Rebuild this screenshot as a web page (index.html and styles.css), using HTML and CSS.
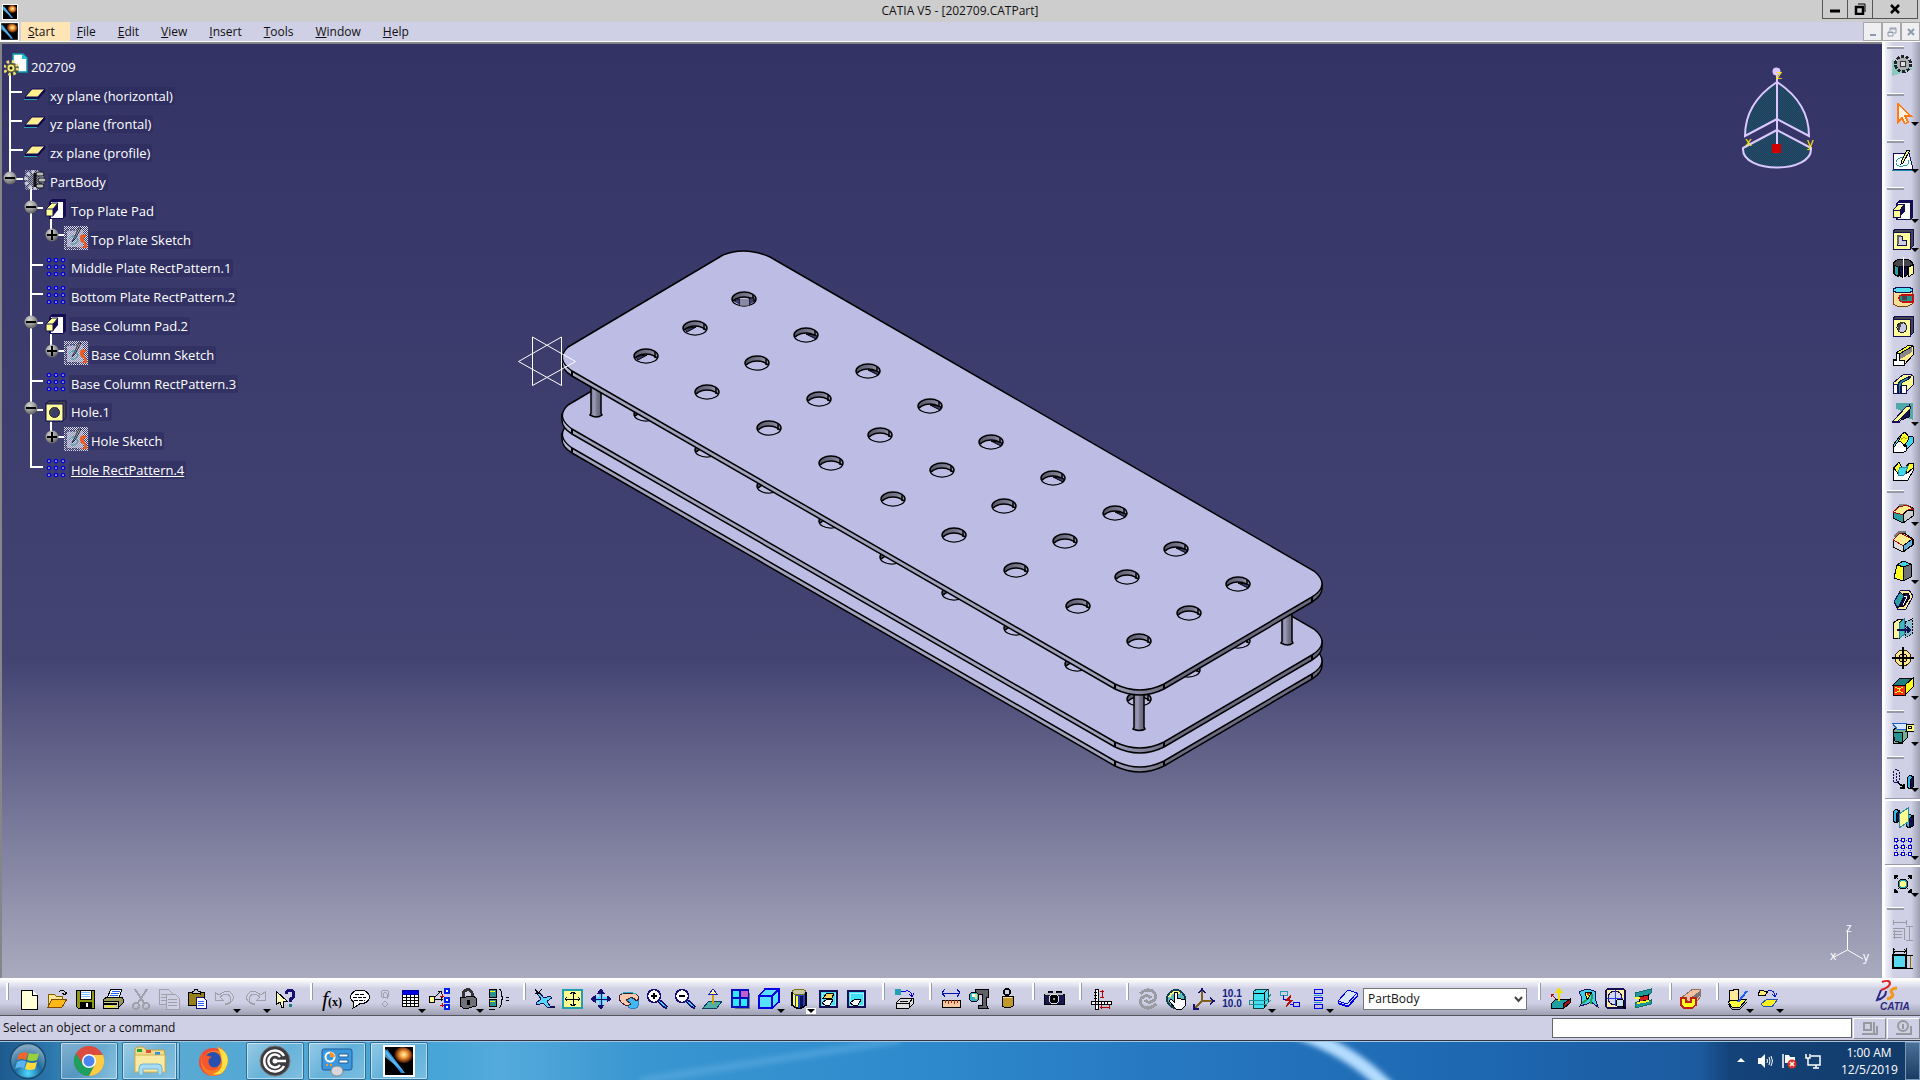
FILE: index.html
```html
<!DOCTYPE html>
<html lang="en">
<head>
<meta charset="utf-8">
<title>CATIA V5 - [202709.CATPart]</title>
<link rel="stylesheet" href="styles.css">
</head>
<body>
<svg class="defs" aria-hidden="true">
  <defs>
    <radialGradient id="knobFill" cx="40%" cy="30%" r="75%"><stop offset="0" stop-color="#d5d5d5"/><stop offset=".6" stop-color="#8f8f8f"/><stop offset="1" stop-color="#555"/></radialGradient>
    <radialGradient id="flame" cx="58%" cy="38%" r="45%"><stop offset="0" stop-color="#fff0c0"/><stop offset=".35" stop-color="#f9a640"/><stop offset=".75" stop-color="#8a3c10"/><stop offset="1" stop-color="#000"/></radialGradient>
    <linearGradient id="side" gradientUnits="userSpaceOnUse" x1="562" y1="0" x2="1322" y2="0"><stop offset="0" stop-color="#c4c3e4"/><stop offset=".02" stop-color="#a3a2be"/><stop offset=".72" stop-color="#a3a2be"/><stop offset=".8" stop-color="#6b6a80"/><stop offset="1" stop-color="#6b6a80"/></linearGradient>
    <linearGradient id="column"><stop offset="0" stop-color="#72718a"/><stop offset=".35" stop-color="#9c9bb8"/><stop offset=".6" stop-color="#77768e"/><stop offset="1" stop-color="#5d5c70"/></linearGradient>
    <linearGradient id="bore"><stop offset="0" stop-color="#585769"/><stop offset=".6" stop-color="#77768d"/><stop offset="1" stop-color="#a3a2be"/></linearGradient>
    <pattern id="mesh" width="2" height="2" patternUnits="userSpaceOnUse"><rect width="2" height="2" fill="#333366"/><path d="M0 0h1v1H0zM1 1h1v1H1z" fill="#0f5a60"/></pattern>
    <pattern id="dither" width="2" height="2" patternUnits="userSpaceOnUse"><path d="M0 0h1v1H0zM1 1h1v1H1z" fill="#dcdce8"/></pattern>
    <clipPath id="holeClip"><ellipse rx="11.5" ry="6.5"/></clipPath>

    <symbol id="catia" viewBox="0 0 16 16"><path d="M0 0h16v16H0z" fill="#fff"/><path d="M1 1h14v14H1z" fill="#000"/><ellipse cx="9.500" cy="6" rx="5.500" ry="5" fill="url(#flame)"/><path d="M1 4L9 14H11L2 2Z" fill="#2b86d8"/><path d="M1 2L11 14 1 6Z" fill="#69c3f5" opacity=".75"/></symbol>
    <symbol id="plane" viewBox="0 0 22 12"><path d="M1 9L8 1H21L14 9Z" fill="#ffee8c" stroke="#100a50"/><path d="M1 10h13l7-8" fill="none" stroke="#100a50" stroke-width="2"/><path d="M0 11.500h13" stroke="#2aa0a8"/></symbol>
    <symbol id="pad" viewBox="0 0 22 22"><path d="M4 4L7 1H21V18L18 21H4Z" fill="#140f55"/><path d="M6 4H18V20H6Z" fill="#fff"/><path d="M1 11L7 5H13L8 11V18H1Z" fill="#ffff90" stroke="#140f55"/><path d="M8 11L13 5V12L8 18Z" fill="#140f55"/><path d="M1 11H8" stroke="#140f55"/></symbol>
    <symbol id="sketch" viewBox="0 0 24 24"><path d="M0 0h24v24H0z" fill="url(#dither)"/><path d="M3 4h16v17H3z" fill="#c4c6dc" opacity=".65"/><path d="M2 4v18h13M3 4h10" stroke="#25285e" stroke-dasharray="2 1" fill="none"/><path d="M17 2L11 13 8 16 10 12 15 2Z" fill="#e6e080" stroke="#181850"/><path d="M5 13q5-7 9 1-2 5-7 4" stroke="#2a9aa0" fill="none"/><path d="M22 9q-6-2-6 3t4 5q2 5-6 5h9v-3l-3-5q-2-3 2-3Z" fill="#f05a1e"/></symbol>
    <symbol id="pattern" viewBox="0 0 22 22"><path d="M4 4H18M4 11H18M4 18H18M4 4V18M11 4V18M18 4V18" stroke="#2020d0" stroke-dasharray="1 1"/><g fill="#fffaa0" stroke="#0000e0" stroke-width="1.500"><circle cx="4" cy="4" r="1.600"/><circle cx="11" cy="4" r="1.600"/><circle cx="18" cy="4" r="1.600"/><circle cx="4" cy="11" r="1.600"/><circle cx="11" cy="11" r="1.600"/><circle cx="18" cy="11" r="1.600"/><circle cx="4" cy="18" r="1.600"/><circle cx="11" cy="18" r="1.600"/><circle cx="18" cy="18" r="1.600"/></g></symbol>
    <symbol id="holeicon" viewBox="0 0 22 22"><path d="M1 3L4 1H21V18L18 21H1Z" fill="#45454a" stroke="#140f55"/><path d="M1 4H18V21H1Z" fill="#ffff99" stroke="#140f55"/><circle cx="10" cy="12.500" r="5" fill="#c8c8e6" stroke="#222"/><path d="M6 15V10l4-3h4q-6 1-6 8Z" fill="#45454a"/></symbol>
    <symbol id="holenode" viewBox="0 0 22 22"><path d="M1 3L4 1H21V18L18 21H1Z" fill="#45454a" stroke="#140f55"/><path d="M1 4H18V21H1Z" fill="#ffff99" stroke="#140f55"/><circle cx="9.500" cy="12.500" r="5" fill="#3d3c6c" stroke="#222"/><path d="M5 15V10l4-3h4q-6 1-6 8Z" fill="#45454a"/></symbol>
    <symbol id="minus" viewBox="0 0 14 14"><circle cx="7" cy="7" r="6.500" fill="url(#knobFill)"/><path d="M2 7H12" stroke="#000" stroke-width="2"/></symbol>
    <symbol id="plus" viewBox="0 0 14 14"><circle cx="7" cy="7" r="6.500" fill="url(#knobFill)"/><path d="M2 7H12M7 2V12" stroke="#000" stroke-width="2"/></symbol>

    <g id="plate">
      <path d="M562 357V362Q562 370 572 376L1115 689Q1140 701 1164 689L1312 602Q1322 596 1322 588V583Z" fill="url(#side)" stroke="#000" stroke-width="1.500"/>
      <path d="M568 347L723 255Q745 246 770 257L1314 571Q1331 585 1312 597L1164 684Q1140 696 1115 684L572 371Q555 359 568 347Z" fill="#bdbce4" stroke="#000" stroke-width="1.500"/>
      <path d="M572 371v5M1115 684v5M1164 684v5M1312 597v5" stroke="#000" stroke-width="2"/>
    </g>
    <g id="hole"><ellipse rx="12" ry="7" fill="url(#bore)" stroke="#000" stroke-width="1.500"/><g clip-path="url(#holeClip)"><ellipse cy="5" rx="12" ry="7" fill="#bdbce4" stroke="#000" stroke-width="1.500"/><path d="M9-4V2" stroke="#000" stroke-width="1.500"/></g></g>
    <g id="holeR"><use href="#hole"/><path d="M0-1L10 4 11 1 8 0Z" fill="#3d3c6c" stroke="#000"/></g>
    <g id="holeL"><use href="#hole"/><path d="M1-1L-8 4-10 1-7 0Z" fill="#3d3c6c" stroke="#000"/></g>
  </defs>
</svg>

<header class="titlebar">
  <svg class="app-icon"><use href="#catia"/></svg>
  <h1 class="title">CATIA V5 - [202709.CATPart]</h1>
  <div class="win-buttons">
    <button aria-label="Minimize"><svg viewBox="0 0 12 12"><path d="M1 8H11" stroke="#000" stroke-width="3"/></svg></button>
    <button aria-label="Restore"><svg viewBox="0 0 12 12"><path d="M2 4H9V11H2Z" stroke="#000" stroke-width="2.500" fill="none"/><path d="M4 1H11V9" stroke="#000" fill="none"/></svg></button>
    <button class="close" aria-label="Close"><svg viewBox="0 0 12 12"><path d="M2 2L10 10M10 2L2 10" stroke="#000" stroke-width="2.500"/></svg></button>
  </div>
</header>

<nav class="menubar">
  <svg class="doc-icon"><use href="#catia"/></svg>
  <button class="menu active"><u>S</u>tart</button>
  <button class="menu"><u>F</u>ile</button>
  <button class="menu"><u>E</u>dit</button>
  <button class="menu"><u>V</u>iew</button>
  <button class="menu"><u>I</u>nsert</button>
  <button class="menu"><u>T</u>ools</button>
  <button class="menu"><u>W</u>indow</button>
  <button class="menu"><u>H</u>elp</button>
  <div class="doc-buttons">
    <button aria-label="Minimize document"><svg viewBox="0 0 10 10"><path d="M2 8H8" stroke="#8d9bb0" stroke-width="2"/></svg></button>
    <button aria-label="Restore document"><svg viewBox="0 0 10 10"><path d="M1 5H6V9H1ZM3 4V1H9V6H7M1 5.500H6M3 2H9" stroke="#8d9bb0" fill="none"/></svg></button>
    <button aria-label="Close document"><svg viewBox="0 0 10 10"><path d="M2 2L8 8M8 2L2 8" stroke="#8d9bb0" stroke-width="2"/></svg></button>
  </div>
</nav>

<div class="work">
  <main class="viewport">
    <svg class="scene" viewBox="2 44 1880 934" preserveAspectRatio="xMidYMid meet" role="img" aria-label="Perforated plate part">
      <use href="#plate" y="77"/>
      <use href="#plate" y="58"/>
      <use href="#hole" x="646" y="414"/><use href="#hole" x="707" y="450"/><use href="#hole" x="769" y="486"/><use href="#hole" x="831" y="521"/><use href="#hole" x="892" y="557"/><use href="#hole" x="954" y="593"/><use href="#hole" x="1016" y="628"/><use href="#hole" x="1077" y="664"/><use href="#hole" x="1139" y="699"/><use href="#hole" x="1188" y="670"/><use href="#hole" x="1238" y="641"/>
      <g fill="url(#column)" stroke="#000" stroke-width="1.500"><path d="M591 380V413l-1 2q7 4 12 0l-1-2V380Z"/><path d="M1282 600V641l-1 2q7 4 12 0l-1-2V600Z"/><path d="M1134 690V727l-1 2q7 3 12 0l-1-2V690Z"/></g>
      <use href="#plate"/>
      <use href="#hole" x="744" y="299"/><path d="M735 302v-3h5v6M749 305v-7h5v4" fill="#3d3c6c" stroke="#000"/><path d="M740 299H749V305.500H740Z" fill="#8a89a4"/>
      <use href="#holeR" x="806" y="335"/><use href="#holeR" x="868" y="371"/><use href="#holeR" x="930" y="406"/><use href="#holeR" x="991" y="442"/><use href="#holeR" x="1053" y="478"/><use href="#holeR" x="1115" y="513"/><use href="#holeR" x="1176" y="549"/><use href="#holeR" x="1238" y="584"/>
      <use href="#holeL" x="695" y="328"/><use href="#hole" x="757" y="363"/><use href="#hole" x="819" y="399"/><use href="#hole" x="880" y="435"/><use href="#hole" x="942" y="470"/><use href="#hole" x="1004" y="506"/><use href="#hole" x="1065" y="541"/><use href="#hole" x="1127" y="577"/><use href="#hole" x="1189" y="613"/>
      <use href="#holeL" x="646" y="356"/><use href="#hole" x="707" y="392"/><use href="#hole" x="769" y="428"/><use href="#hole" x="831" y="463"/><use href="#hole" x="893" y="499"/><use href="#hole" x="954" y="535"/><use href="#hole" x="1016" y="570"/><use href="#hole" x="1078" y="606"/><use href="#hole" x="1139" y="641"/>
      <path d="M532.500 337L575.500 361.500 532.500 385.500ZM561.500 337L518.500 361.500 561.500 385.500Z" fill="none" stroke="#fff"/>
      <g class="compass">
        <path d="M1777 82Q1745 103 1745 136L1777 119 1809 136Q1809 103 1777 82Z" fill="url(#mesh)"/>
        <path d="M1743 148L1777 130 1811 148C1813 174 1741 174 1743 148Z" fill="url(#mesh)"/>
        <path d="M1777 72V148"/>
        <circle cx="1776.500" cy="71.500" r="3" fill="#dcc8ff"/>
        <path d="M1772 144h9v9h-9z" fill="#d00000" stroke="none"/>
      </g>
      <g class="axis-names"><text x="1776" y="79">z</text><text x="1745" y="146">x</text><text x="1807" y="147">y</text></g>
      <path d="M1847.500 931V950L1834 957M1847.500 950L1863 959" stroke="#fff" fill="none"/>
      <g class="triad"><text x="1846" y="932">z</text><text x="1830" y="960">x</text><text x="1863" y="961">y</text></g>
    </svg>

    <div class="tree">
      <svg class="tree-lines" viewBox="2 54 300 432" aria-hidden="true">
        <path d="M10 70V178M10 92H22M10 121H22M10 150H23M10 179H23M31 187V467H43M31 208H43M31 265H43M31 294H43M31 323H43M31 381H43M31 410H43M51 218V235H64M51 332V351H64M51 419V437H64" fill="none" stroke="#fff" stroke-width="2"/>
        <use href="#minus" x="3" y="171" width="14" height="14"/><use href="#minus" x="24" y="200" width="14" height="14"/><use href="#plus" x="45" y="228" width="14" height="14"/><use href="#minus" x="24" y="315" width="14" height="14"/><use href="#plus" x="45" y="344" width="14" height="14"/><use href="#minus" x="24" y="401" width="14" height="14"/><use href="#plus" x="45" y="430" width="14" height="14"/>
      </svg>
      <ul class="rows">
        <li class="root"><svg class="node" viewBox="0 0 24 24"><path d="M9 1h10l4 4v14H9z" fill="#fff" stroke="#0a9aa8" stroke-width="1.500"/><path d="M18 1v5h5" fill="#19c4d0"/><circle cx="9" cy="16" r="6" fill="#333" opacity=".8"/><circle cx="7" cy="15" r="6.500" fill="none" stroke="#e8dc78" stroke-width="3" stroke-dasharray="2.500 2.600"/><circle cx="7" cy="15" r="4" fill="#f3ea80" stroke="#6c6420"/><circle cx="7" cy="15" r="1.500" fill="#222"/></svg><span>202709</span></li>
        <li class="l1"><svg class="node flat"><use href="#plane"/></svg><span>xy plane (horizontal)</span></li>
        <li class="l1"><svg class="node flat"><use href="#plane"/></svg><span>yz plane (frontal)</span></li>
        <li class="l1"><svg class="node flat"><use href="#plane"/></svg><span>zx plane (profile)</span></li>
        <li class="l1"><svg class="node" viewBox="0 0 22 22"><circle cx="10" cy="11" r="8" fill="none" stroke="#c0c4cc" stroke-width="4" stroke-dasharray="3 2"/><circle cx="10" cy="11" r="6" fill="#4a4c68"/><path d="M1 1h14v20H1z" fill="url(#dither)" opacity=".6"/><path d="M11 4v14" stroke="#111" stroke-width="3"/><g fill="#b8bcc0" stroke="#111"><rect x="12" y="3" width="8" height="4" rx="2"/><rect x="14" y="9" width="8" height="4" rx="2"/><rect x="12" y="15" width="8" height="4" rx="2"/></g></svg><span>PartBody</span></li>
        <li class="l2"><svg class="node"><use href="#pad"/></svg><span>Top Plate Pad</span></li>
        <li class="l3"><svg class="node"><use href="#sketch"/></svg><span>Top Plate Sketch</span></li>
        <li class="l2"><svg class="node"><use href="#pattern"/></svg><span>Middle Plate RectPattern.1</span></li>
        <li class="l2"><svg class="node"><use href="#pattern"/></svg><span>Bottom Plate RectPattern.2</span></li>
        <li class="l2"><svg class="node"><use href="#pad"/></svg><span>Base Column Pad.2</span></li>
        <li class="l3"><svg class="node"><use href="#sketch"/></svg><span>Base Column Sketch</span></li>
        <li class="l2"><svg class="node"><use href="#pattern"/></svg><span>Base Column RectPattern.3</span></li>
        <li class="l2"><svg class="node"><use href="#holenode"/></svg><span>Hole.1</span></li>
        <li class="l3"><svg class="node"><use href="#sketch"/></svg><span>Hole Sketch</span></li>
        <li class="l2 current"><svg class="node"><use href="#pattern"/></svg><span>Hole RectPattern.4</span></li>
      </ul>
    </div>
  </main>

  <aside class="sidebar">
    <div class="group"><button aria-label="Workbench"><svg viewBox="0 0 22 22"><path d="M0 5V21L22 14Z" fill="#8cc8c0" stroke="none"/><circle cx="11" cy="9" r="7" stroke="#222" stroke-width="4" stroke-dasharray="3 1.400"/><circle cx="11" cy="9" r="6" stroke="#222"/><circle cx="11" cy="9" r="5" stroke="#a8aeb4" stroke-width="3"/><circle cx="11" cy="9" r="3" fill="#ddd" stroke="#333"/></svg></button></div>
    <div class="group"><button class="drop" aria-label="Select"><svg viewBox="0 0 22 22"><path d="M6 2V20L10 16 13 22 16 20 13 14H19Z" fill="#fff0e0" stroke="#ff7a10" stroke-width="1.500"/></svg></button></div>
    <div class="group"><button class="drop" aria-label="Sketcher"><svg viewBox="0 0 22 22"><path d="M1 4H17L21 20H1Z" fill="#fff" stroke="#140f55"/><path d="M0 21H21" stroke="#2090a0"/><path d="M12 9q-7-1-8 4t7 4 5-6" stroke="#20a0a8"/><path d="M18 1L11 14 9 15 10 11 15 1Z" fill="#f4f080"/></svg></button></div>
    <div class="group low tight">
      <button class="drop" aria-label="Pad"><svg><use href="#pad"/></svg></button>
      <button class="drop" aria-label="Pocket"><svg viewBox="0 0 22 22"><path d="M1 3L4 1H21V18L18 21H1Z" fill="#45454a" stroke="#140f55"/><path d="M1 4H18V21H1Z" fill="#ffff99" stroke="#140f55"/><path d="M5 8H10V12H14V17H5Z" fill="#cfcfe5" stroke="#140f55"/><path d="M6 16V8H9" stroke="#666" stroke-width="2"/></svg></button>
      <button aria-label="Shaft"><svg viewBox="0 0 22 22"><path d="M1 8Q2 2 11 2T21 8V17L16 20V10H7L6 20 2 17Z" fill="#45454a"/><path d="M2 8L6 10V19L2 17Z" fill="#2aa0a0"/><path d="M7 9h3v11L7 18ZM12 9h3v9L12 20Z" fill="#140f55"/><path d="M16 10L21 8V17L16 20Z" fill="#ffff90"/><path d="M11 0V22" stroke="#fff"/></svg></button>
      <button aria-label="Groove"><svg viewBox="0 0 22 22"><path d="M1 4V18Q11 24 20 18V4Z" fill="#fbdf98" stroke="#804010"/><ellipse cx="11" cy="4" rx="10" ry="3" fill="#50e0f0" stroke="#140f55"/><path d="M21 9H11Q7 9 7 12T11 16H21Z" fill="#209090" stroke="#c01010" stroke-width="1.500"/><path d="M10 10H15V14H10Z" fill="#45454a" stroke="none"/></svg></button>
      <button aria-label="Hole"><svg><use href="#holeicon"/></svg></button>
      <button aria-label="Rib"><svg viewBox="0 0 22 22"><path d="M1 15H4V9L17 1 21 2V11L12 21H1Z" fill="#ffeb90"/><path d="M7 10L20 3V8L7 16Z" fill="#888" stroke="none"/><path d="M4 9L17 1 21 2 7 10Z" fill="#ffff30"/><path d="M1 16H4V9H7V16H12V21H1Z" fill="#fff"/></svg></button>
      <button aria-label="Slot"><svg viewBox="0 0 22 22"><path d="M1 10L12 1H18L21 3V12L13 20H1Z" fill="#ffff90" stroke="#140f55"/><path d="M1 11H5V20H1ZM9 12H14V20H9Z" fill="#fff" stroke="#140f55"/><path d="M6 20V11Q7 8 14 5L19 3Q17 7 11 9 8 11 9 20Z" fill="#209090" stroke="#140f55"/></svg></button>
      <button class="drop" aria-label="Stiffener"><svg viewBox="0 0 22 22"><path d="M4 1H21V18Q14 16 8 8L4 7Z" fill="#50a8a8" stroke="none"/><path d="M17 4V15L9 18Z" fill="#140f55"/><path d="M1 19L15 4H18V7L5 20Z" fill="#ffff90" stroke="#140f55"/><path d="M0 20H8" stroke="#140f55" stroke-width="2"/></svg></button>
      <button aria-label="Multi-sections solid"><svg viewBox="0 0 22 22"><path d="M1 14L8 5Q13-2 16 5L21 6V12L12 21H1Z" fill="#40d8f0"/><path d="M6 11L10 3Q13 0 16 5 17 10 14 12L12 15Q9 9 6 11Z" fill="#ffff20"/><path d="M1 15Q3 16 4 13 8 8 11 13T14 14V20L12 21H1Z" fill="#fff"/><path d="M9 9q2-4 6-1" stroke="#c0a000"/></svg></button>
      <button aria-label="Removed multi-sections solid"><svg viewBox="0 0 22 22"><path d="M1 8L6 3 9 9 13 8 17 3 21 4V11L16 20H1Z" fill="#fff"/><path d="M2 8L7 2 10 8 7 15ZM14 12L17 3H21V8L14 14Z" fill="#ffff20"/><path d="M6 14Q7 7 9 7L13 8 16 6Q13 15 12 15T6 16Z" fill="#40d8f0" stroke="#2090a8"/></svg></button>
    </div>
    <div class="group low mid">
      <button class="drop" aria-label="Edge fillet"><svg viewBox="0 0 22 22"><path d="M1 10V16L11 21 21 14V6L14 3 6 5Z" fill="#2aa0a0"/><path d="M7 2h9l-4 2-5 1Z" fill="#888" stroke="none"/><path d="M1 10L7 5 15 3 21 7Q14 7 11 13Z" fill="#ffeb90" stroke="#a01010"/><path d="M11 13Q13 8 21 8V14L11 21Z" fill="#ccc"/></svg></button>
      <button aria-label="Chamfer"><svg viewBox="0 0 22 22"><path d="M1 10V16L11 21 21 14V8L12 2Z" fill="#ddd"/><path d="M1 9L8 2 20 8 12 15Z" fill="#ffeb90" stroke="#a01010"/><path d="M11 15L20 8V14L11 21Z" fill="#60b0e0"/><path d="M2 6L7 1h7" stroke="#777" stroke-width="2"/></svg></button>
      <button class="drop" aria-label="Draft angle"><svg viewBox="0 0 22 22"><path d="M5 5L11 1 19 4V17L11 21 2 17Z" fill="#707078"/><path d="M5 5L12 7 11 21 2 18Z" fill="#ffff20"/><path d="M5 5L11 1 19 4 12 7Z" fill="#40d0e0"/></svg></button>
      <button aria-label="Shell"><svg viewBox="0 0 22 22"><path d="M2 13L8 2 17 1 21 7 14 20 6 21Z" fill="#ffeb90" stroke="#140f55"/><path d="M2 13L8 3 12 7 6 19Z" fill="#2aa0a0" stroke="#140f55"/><path d="M11 4L16 4 18 8 12 17H8L13 7Z" fill="#140f55"/><path d="M12 7l3 1-4 8" stroke="#fff"/></svg></button>
      <button aria-label="Thickness"><svg viewBox="0 0 22 22"><path d="M1 5L7 1H12L7 5V20H1Z" fill="#fff3a0"/><path d="M8 5L12 1V17L7 20Z" fill="#40b8c0" stroke="#2080a0"/><path d="M13 4L20 1V16L13 20Z" fill="#8cc0d0" stroke-dasharray="2 1"/><path d="M5 12H18M15 9L18 12 15 15" stroke="#140f55" stroke-width="1.500"/></svg></button>
      <button aria-label="Thread"><svg viewBox="0 0 22 22"><circle cx="11" cy="11" r="8" fill="#ffe88a" stroke="#302000"/><circle cx="11" cy="11" r="4" fill="#f8d878"/><path d="M11 0V22M0 11H22" stroke-width="1.500"/></svg></button>
      <button class="drop" aria-label="Replace face"><svg viewBox="0 0 22 22"><path d="M1 9L8 2H21L13 9Z" fill="#208080"/><path d="M13 9L21 2V11L13 19Z" fill="#ffff20"/><path d="M1 9H13V19H1Z" fill="#ff3010"/><path d="M3 11q4 3 8 0M3 17q4-3 8 0M7 12v4" stroke="#ffff20"/></svg></button>
    </div>
    <div class="group low mid"><button class="drop" aria-label="Split"><svg viewBox="0 0 22 22"><path d="M1 8L4 6H15V16L10 21H1Z" fill="#70b090"/><path d="M1 10H10V21L3 19Z" fill="#2a9090"/><path d="M0 1L15 2V7L6 8Z" fill="#d8e8ff" stroke="#2060c0"/><path d="M15 2H22V9H14Z" fill="#ffff80"/><circle cx="18" cy="5.500" r="1.500"/></svg></button></div>
    <div class="group low mid"><button class="drop" aria-label="Translation"><svg viewBox="0 0 22 22"><path d="M1 4L4 1 7 3V13L4 15 1 13ZM4 5V15" stroke="#140f55" stroke-dasharray="2 1"/><path d="M6 15L12 19M12 16V20H8" stroke-width="1.500"/><path d="M15 10L18 7 21 9V19L18 21 15 19Z" fill="#30b8e8"/><path d="M18 12V21L21 19V9Z" fill="#140f55"/></svg></button></div>
    <div class="group ruled">
      <button aria-label="Mirror"><svg viewBox="0 0 22 22"><path d="M1 5L4 2 7 4V14L4 16 1 14Z" fill="#30b8e8"/><path d="M4 7V16L7 14V4Z" fill="#140f55"/><path d="M14 10L17 7 21 9V19L17 21 14 19Z" fill="#30b8e8"/><path d="M17 12V21L21 19V9Z" fill="#140f55"/><path d="M7 7L16 1V15L7 21Z" fill="#ffff90" stroke="#2090a0"/></svg></button>
      <button class="drop" aria-label="Rectangular pattern"><svg><use href="#pattern"/></svg></button>
    </div>
    <div class="group ruled mid"><button class="drop" aria-label="Scaling"><svg viewBox="0 0 22 22"><path d="M3 3L19 19M19 3L3 19" stroke-dasharray="4 1"/><path d="M3 6V3H6M16 3H19V6M3 16V19H6M16 19H19V16" stroke-width="1.500"/><circle cx="11" cy="11" r="5" fill="#20a0a0"/><circle cx="11" cy="11" r="3" fill="#ffff90" stroke="none"/></svg></button></div>
    <div class="group low">
      <button aria-label="Constraints dialog" disabled><svg viewBox="0 0 22 22"><path class="gray" d="M1 1V6M14 1V6M1 3.500H14M17 7V21M14 7H21M14 21H21M1 9H12V21M1 12H10M1 15H10M1 18H10M2 11V20"/></svg></button>
      <button aria-label="Constraint"><svg viewBox="0 0 22 22"><path d="M1 0V6M14 0V6M1 3H14M3 1L1 3 3 5M12 1L14 3 12 5"/><path d="M18 7V20" stroke="#807800"/><path d="M15 7H21M15 20H21"/><path d="M1 7H14V20H1Z" fill="#58d8f0" stroke="#000" stroke-width="1.500"/></svg></button>
    </div>
  </aside>
</div>

<section class="toolbar">
  <div class="tools">
    <button aria-label="New"><svg viewBox="0 0 22 22"><path d="M3 2H14L19 7V21H3Z" fill="#ffffd8"/><path d="M14 2V7H19" fill="#fff"/></svg></button>
    <button aria-label="Open"><svg viewBox="0 0 22 22"><path d="M2 19V6H8L10 8H16V11" fill="#ffe890" stroke="#806000"/><path d="M2 19L6 11H21L16 19Z" fill="#ffb818" stroke="#804800"/><path d="M13 4Q16 1 19 4V7M16 5L19 7 21 4"/></svg></button>
    <button aria-label="Save"><svg viewBox="0 0 22 22"><path d="M2 2H20V20H4L2 18Z" fill="#909818"/><path d="M6 2H17V11H6Z" fill="#fff"/><path d="M7 4H16M7 6H16M7 8H16" stroke="#80c0ff"/><path d="M6 14H17V20H6Z" fill="#000"/><path d="M13 15V19" stroke="#fff" stroke-width="2"/></svg></button>
    <button aria-label="Print"><svg viewBox="0 0 22 22"><path d="M5 10L9 1H20L17 10Z" fill="#fff"/><path d="M10 3H18M9 5H17M8 7H16" stroke="#2060ff"/><path d="M1 12L5 9H20L21 11V15L16 20H2Z" fill="#98985c"/><path d="M1 13H16V20H1Z" fill="#d0d098"/><path d="M2 16H15" stroke-width="2"/><path d="M4 18h8" stroke="#fff000"/></svg></button>
    <button aria-label="Cut"><svg class="dim" viewBox="0 0 22 22"><path d="M5 1L14 15M17 1L8 15" stroke-width="2"/><circle cx="6" cy="18" r="3" stroke-width="2"/><circle cx="16" cy="18" r="3" stroke-width="2"/></svg></button>
    <button aria-label="Copy"><svg class="dim" viewBox="0 0 22 22"><path d="M1 1H10L14 5V16H1ZM3 6H12M3 9H12M3 12H8"/><path d="M8 6H17L21 10V21H8ZM10 11H19M10 14H19M10 17H19" fill="#cfcfe5"/></svg></button>
    <button aria-label="Paste"><svg viewBox="0 0 22 22"><path d="M2 4H18V17H2Z" fill="#988018"/><path d="M6 5V3H8Q10-1 12 3H14V6Z" fill="#ccc"/><path d="M10 9H17L20 12V20H10Z" fill="#fff" stroke="#101080"/><path d="M12 13H18M12 15H18M12 17H18" stroke="#3060ff"/></svg></button>
    <button class="drop" aria-label="Undo"><svg class="dim" viewBox="0 0 22 22"><path d="M1 4V12H9L6 9Q13 3 16 9T11 16H14Q22 12 18 6T5 7Z"/></svg></button>
    <button class="drop" aria-label="Redo"><svg class="dim" viewBox="0 0 22 22"><path d="M21 4V12H13L16 9Q9 3 6 9T11 16H8Q0 12 4 6T17 7Z"/></svg></button>
    <button aria-label="What's this"><svg viewBox="0 0 22 22"><path d="M2 3V17L6 14 8 20 10 19 9 13H13Z" fill="#ffffc0"/><path d="M12 6Q12 2 16 2T20 6 16 11V14" stroke="#140f70" stroke-width="3"/><path d="M16 16V19" stroke="#108080" stroke-width="3"/></svg></button>
  </div>
  <div class="tools">
    <button aria-label="Formula"><span class="fx">f<small>(x)</small></span></button>
    <button aria-label="Comment"><svg viewBox="0 0 22 22"><ellipse cx="11" cy="9" rx="9.500" ry="7" fill="#fff"/><path d="M5 13L4 20 11 16" fill="#fff"/><path d="M6 6H16M4 9H17M5 12H16" stroke-dasharray="4 1"/></svg></button>
    <button class="narrow" aria-label="Knowledge"><svg class="dim" viewBox="0 0 22 22"><circle cx="11" cy="6" r="4"/><path d="M9 10V6Q11 3 13 6V11M11 13L14 16 11 19 8 16Z"/></svg></button>
    <button class="drop" aria-label="Design table"><svg viewBox="0 0 22 22"><path d="M3 2H19V18H3Z" fill="#fff"/><path d="M3 9H19M3 12H19M3 15H19M7 5V18M11 5V18M15 5V18"/><path d="M3 2H19V6H3Z" fill="#0000e0" stroke="#0000a0"/></svg></button>
    <button aria-label="Relations"><svg viewBox="0 0 22 22"><path d="M0 8H5V14H0Z" fill="#ffff90"/><path d="M16 1H20V5H16ZM16 10H20V14H16ZM16 17H20V21H16Z" fill="#fff" stroke="#0020f0" stroke-width="1.500"/><path d="M6 9L12 3M9 3H12V6M6 11H14M12 9V13"/><path d="M11 8H15M13 6V10M11 17H15M13 15V19" stroke="#c00000"/></svg></button>
    <button class="drop" aria-label="Lock"><svg viewBox="0 0 22 22"><path d="M6 10V5Q11-2 15 5V9" stroke="#333" stroke-width="3"/><path d="M3 10L16 8 19 10V18L8 21 3 18Z" fill="#707078"/><path d="M11 12v5" stroke-width="3"/></svg></button>
    <button aria-label="Equivalent dimensions"><svg viewBox="0 0 22 22"><path d="M2 1H9V9H2ZM2 11H9V18H2Z" fill="#2a9090"/><path d="M3 3H8M3 13H8" stroke="#ff0"/><path d="M12 1Q15 2 14 7L16 10 14 13Q15 18 12 20M19 9H22M19 12H22M2 21H8"/></svg></button>
  </div>
  <div class="tools">
    <button aria-label="Fly mode"><svg viewBox="0 0 22 22"><path d="M2 4L5 4 10 10 16 8 18 10 13 13 16 18 21 19 14 20 9 15 3 17 2 15 7 11Z" fill="#58d8f8" stroke="#140f55"/><path d="M1 1L4 5L8 1M1 6L7 5"/></svg></button>
    <button aria-label="Fit all in"><svg viewBox="0 0 22 22"><path d="M1 2H20V20H1Z" fill="#ffff90" stroke="#20a0a8" stroke-width="1.500"/><path d="M11 4V18M3 11H18M8 6L11 4 14 6M8 16L11 18 14 16M5 9L3 11 5 13M16 9L18 11 16 13"/></svg></button>
    <button aria-label="Pan"><svg viewBox="0 0 22 22"><path d="M11 2V20M2 11H20" stroke="#50d8ff" stroke-width="4"/><path d="M11 1V21M1 11H21M8 5L11 1 14 5ZM8 17L11 21 14 17ZM5 8L1 11 5 14ZM17 8L21 11 17 14Z" fill="#140f70" stroke="#140f70"/></svg></button>
    <button aria-label="Rotate"><svg viewBox="0 0 22 22"><circle cx="15" cy="15" r="6" fill="#40b8f8" stroke="#3080c0"/><path d="M1 8L5 5H14Q20 5 21 11L18 13Q16 9 12 10L8 12 13 16 9 18Q2 15 1 10Z" fill="#f8c8b0" stroke="#402020"/><path d="M3 6Q10 2 18 6" stroke="#30b0c8"/></svg></button>
    <button aria-label="Zoom in"><svg viewBox="0 0 22 22"><path d="M12 12L21 20" stroke="#140f70" stroke-width="4"/><path d="M13 13L20 19" stroke="#50d0ff"/><circle cx="8" cy="8" r="6.500" fill="#fff" stroke="#140f70" stroke-width="1.500"/><path d="M8 5V11M5 8H11" stroke-width="2"/></svg></button>
    <button aria-label="Zoom out"><svg viewBox="0 0 22 22"><path d="M12 12L21 20" stroke="#140f70" stroke-width="4"/><path d="M13 13L20 19" stroke="#50d0ff"/><circle cx="8" cy="8" r="6.500" fill="#fff" stroke="#140f70" stroke-width="1.500"/><path d="M5 8H11" stroke-width="2"/></svg></button>
    <button aria-label="Normal view"><svg viewBox="0 0 22 22"><path d="M1 20L7 13H20L15 20Z" fill="#50b0a8" stroke="#104060"/><path d="M11 16V6" stroke="#d0a000" stroke-width="1.500"/><path d="M7 6L11 1 15 6Z" fill="#ffff90" stroke="#2020c0"/></svg></button>
    <button aria-label="Multi-view"><svg viewBox="0 0 22 22"><path d="M5 5H20V21H5Z" fill="#777" stroke="none"/><path d="M2 2H18V19H2Z" fill="#30e8ff" stroke="#0010c0" stroke-width="1.500"/><path d="M10 2H18V10H10Z" fill="#c060d0" stroke="#0010c0"/><path d="M10 2V19M2 10H18" stroke="#0010c0" stroke-width="1.500"/></svg></button>
    <button class="drop" aria-label="Isometric view"><svg viewBox="0 0 22 22"><path d="M1 8L7 1H21V14L14 20H1Z" fill="#58e0ff" stroke="#0000e0" stroke-width="1.500"/><path d="M1 8H14V20M14 8L21 1" stroke="#0000e0" stroke-width="1.500"/></svg></button>
    <button class="drop on" aria-label="Shading with edges"><svg viewBox="0 0 22 22"><path d="M4 4V17Q11 24 18 17V4Z" fill="#2040c0"/><path d="M6 6V19M9 8V20" stroke="#ffff40" stroke-width="2"/><path d="M13 8V20" stroke="#10104c" stroke-width="3"/><ellipse cx="11" cy="4" rx="7" ry="3" fill="#c8c8a8" stroke="#807000"/><path d="M4 4V17Q11 24 18 17V4" stroke-width="1.500"/></svg></button>
    <button aria-label="Hide or show"><svg viewBox="0 0 22 22"><path d="M2 3H19V19H2Z" fill="#40e0f8" stroke="#140f55" stroke-width="1.500"/><path d="M4 5H17V17H4Z" stroke="#a0f0ff"/><path d="M5 10L9 5H16L14 10Z" fill="#f0d860"/><path d="M4 15L9 11 15 12 12 17H7Z" fill="#fff"/></svg></button>
    <button aria-label="Swap visible space"><svg viewBox="0 0 22 22"><path d="M2 3H19V19H2Z" fill="#40e0f8" stroke="#140f55" stroke-width="1.500"/><path d="M4 5H17V17H4Z" stroke="#a0f0ff"/><path d="M4 15L9 11 15 12 12 17H7Z" fill="#fff"/></svg></button>
  </div>
  <div class="tools"><button aria-label="Apply material"><svg viewBox="0 0 22 22"><circle cx="5" cy="4" r="3.500" fill="#20a0b0" stroke="none"/><path d="M8 3H13Q18 2 19 8M16 6L19 9 21 5" stroke="#0000e0"/><path d="M3 15L8 10H20V16L16 20H3ZM3 15H16V20M16 15L20 10M7 13h8" fill="#ddd"/></svg></button></div>
  <div class="tools">
    <button aria-label="Measure between"><svg viewBox="0 0 22 22"><path d="M2 5H20M5 1L2 5 5 9M17 1L20 5 17 9" stroke="#0010b0"/><path d="M2 12H20V19H2Z" fill="#f8c8a0"/><path d="M5 12V15M8 12V16M11 12V15M14 12V16M17 12V15" stroke="#a03010"/></svg></button>
    <button aria-label="Measure item"><svg viewBox="0 0 22 22"><path d="M7 1H20V9H18V16L20 20H10V17H14V6H7Z" fill="#606068"/><circle cx="6" cy="9" r="5" fill="#30b8d0"/><path d="M4 7h3" stroke="#fff" stroke-width="3"/><path d="M8 6v5" stroke="#f0e060" stroke-width="2"/></svg></button>
    <button aria-label="Measure inertia"><svg viewBox="0 0 22 22"><circle cx="11" cy="4" r="3" stroke-width="1.500"/><path d="M6 8H17V18Q11 22 6 18Z" fill="#c0982c"/><path d="M7 9h9" stroke="#f0e090"/></svg></button>
  </div>
  <div class="tools"><button aria-label="Capture"><svg viewBox="0 0 22 22"><path d="M1 6H5V3H9V5H13V3H18V6H21V16H1Z" fill="#181850"/><path d="M2 6H20" stroke="#bbb" stroke-width="2"/><circle cx="11" cy="11" r="5" fill="#000" stroke="#ddd"/><circle cx="11" cy="11" r="2" fill="#999"/></svg></button></div>
  <div class="tools"><button aria-label="Axis system grid"><svg viewBox="0 0 22 22"><path d="M5 1V21H8V1ZM1 13H21V16H1Z" fill="#fff"/><path d="M4 4H7M4 7H7M4 10H7M11 14V16M14 14V16M17 14V16"/><path d="M12 2V10M10 3H14M10 9H14M10 19H20M11 17V21M19 17V21" stroke="#b00000"/></svg></button></div>
  <div class="tools">
    <button aria-label="Update" disabled><svg viewBox="0 0 22 22"><path class="gray" d="M19 16Q12 23 5 18 1 12 6 9T14 10M3 6Q10-1 17 4 21 10 16 13T8 12" stroke-width="3"/></svg></button>
    <button aria-label="Manual update"><svg viewBox="0 0 22 22"><circle cx="11" cy="11" r="9" fill="#60b8c0" stroke="#104050" stroke-width="2"/><path d="M4 9Q8 2 15 5" stroke="#ffff80" stroke-width="2"/><path d="M9 4H12V10L20 12V18L17 21H11L4 13 6 11 9 14Z" fill="#fff"/></svg></button>
    <button aria-label="Axis system"><svg viewBox="0 0 22 22"><path d="M9 2V13H20M9 13L2 20" stroke="#806020" stroke-width="1.500"/><path d="M6 5L9 1 12 5M17 10L21 13 17 16M1 16V21H6" stroke="#140f70" stroke-width="1.500"/></svg></button>
    <button aria-label="Mean dimensions"><span class="digits">10.1<br>10.0</span></button>
    <button class="drop" aria-label="Create datum"><svg viewBox="0 0 22 22"><path d="M4 4L8 1H19V15L15 20H4Z" fill="#40e0f0" stroke="#104040"/><path d="M4 5H15V20M15 5L19 1"/><path d="M0 12H18L22 6V12L18 16H0Z" stroke="#209098"/></svg></button>
    <button aria-label="Only current body"><svg viewBox="0 0 22 22"><path d="M1 3H8V7H1Z" stroke="#20a0b0"/><path d="M14 14H20V18H14Z" stroke="#0000f0"/><path d="M4 7V11H9M11 16H14" stroke="#0000f0"/><path d="M12 7L7 12H11L7 19L14 12H10Z" fill="#b01010" stroke="#b01010"/></svg></button>
    <button class="drop" aria-label="Tree order"><svg viewBox="0 0 22 22"><path d="M7 1H15V5H7ZM7 9H15V12H7ZM7 16H15V20H7Z" stroke="#0000f0"/><path d="M7 7H15M7 14H15" stroke="#20a0b0"/></svg></button>
    <button aria-label="Catalog"><svg viewBox="0 0 22 22"><path d="M1 13L11 2 20 5V9L11 19 2 16Z" fill="#d8e8f8" stroke="#0000e0"/><path d="M1 13L10 16 20 5M2 15L11 18 20 8" stroke="#0000e0"/></svg></button>
    <select aria-label="Current body"><option>PartBody</option></select>
  </div>
  <div class="tools">
    <button aria-label="Draft analysis"><svg viewBox="0 0 22 22"><path d="M2 16L7 11H21L14 16V20H2Z" fill="#20a0a0"/><path d="M14 16L21 11V15L15 20Z" fill="#a01020"/><path d="M10 13V3M7 5L10 1 13 5" stroke="#f0e000" stroke-width="2"/><path d="M7 11L2 6M2 9V6H5" stroke="#b00000"/></svg></button>
    <button aria-label="Curvature analysis"><svg viewBox="0 0 22 22"><path d="M2 4Q11-1 19 4 17 10 21 19L14 14 10 16 3 18Q7 12 2 4Z" fill="#40d0e8" stroke="#140f55"/><path d="M8 4H15L10 12Z" fill="#ffff20"/><path d="M10 5H13L11 9Z" fill="#e02010" stroke="none"/><path d="M15 6L14 16M5 15L10 12" stroke="#20a040" stroke-width="2"/></svg></button>
    <button aria-label="Tap analysis"><svg viewBox="0 0 22 22"><rect x="1" y="1" width="19" height="19" rx="2" fill="#ffeea0" stroke="#140f55" stroke-width="1.500"/><circle cx="10" cy="10" r="7" fill="#d8d8e8" stroke="#140f55"/><path d="M10 2V18M2 10H18" stroke="#2040f0"/><circle cx="15" cy="15" r="4" fill="#c8e0f0"/><path d="M18 18L21 21" stroke-width="2"/></svg></button>
    <button aria-label="Wall thickness analysis"><svg viewBox="0 0 22 22"><path d="M2 5L18 1V5L14 8V13L18 12V16L2 20V15L6 13V9L2 9Z" fill="#209898" stroke="#107070"/><path d="M6 9L15 7V12L6 14Z" fill="#d02020"/><path d="M2 10H7M4 15L16 13" stroke="#ffff20" stroke-width="2"/></svg></button>
  </div>
  <div class="tools"><button aria-label="Sectioning"><svg viewBox="0 0 22 22"><path d="M1 10L13 1H20V9L15 16Z" fill="#f0c0a0" stroke="#907060"/><path d="M10 10L20 3V8L13 13Z" fill="#777" stroke="none"/><path d="M1 10H6V14H11V10H16V17L12 20H4L1 17Z" fill="#ffff20" stroke="#c02010" stroke-width="1.500"/></svg></button></div>
  <div class="tools">
    <button class="drop" aria-label="Sketch catalog"><svg viewBox="0 0 22 22"><path d="M1 14L7 11H20L13 19H5Z" fill="#ffff40"/><path d="M2 3L11 1 12 12 3 13Z" fill="#ffe898"/><path d="M1 16L5 21H13L20 14"/><path d="M20 3L11 14" stroke="#2060f0" stroke-width="2"/></svg></button>
    <button class="drop" aria-label="Instantiate"><svg viewBox="0 0 22 22"><path d="M1 7L3 2H6L8 4 11 3 8 8Z" fill="#ffee70"/><path d="M12 2Q17 2 18 8M15 6L18 9 20 5" stroke="#0020d0"/><path d="M4 16L10 11H21L15 19 6 18Z" fill="#fff020" stroke="#2050b0"/></svg></button>
  </div>
  <svg class="brand" viewBox="0 0 44 34" role="img" aria-label="DS CATIA">
    <path d="M10 3Q18 0 18 5 16 9 9 11" fill="none" stroke="#e02020" stroke-width="2"/>
    <path d="M9 11L5 21Q14 19 14 12" fill="none" stroke="#2a2880" stroke-width="2"/>
    <path d="M25 9Q17 10 20 14T15 20" fill="none" stroke="#f09818" stroke-width="3"/>
    <text x="8" y="31">CATIA</text>
  </svg>
</section>

<section class="status">
  <label for="power">Select an object or a command</label>
  <input id="power" type="text">
  <button aria-label="Dialog"><svg viewBox="0 0 18 16"><path d="M3 3H10V10H3ZM13 13V2M1 14H16V6" fill="none" stroke="#98989e" stroke-width="2"/></svg></button>
  <button aria-label="Information"><svg viewBox="0 0 18 16"><circle cx="8" cy="6" r="5" fill="none" stroke="#98989e" stroke-width="2"/><path d="M8 4V9M1 14H16V6" fill="none" stroke="#98989e" stroke-width="2"/></svg></button>
</section>

<footer class="taskbar">
  <svg class="sweep" viewBox="0 0 1920 39" preserveAspectRatio="none" aria-hidden="true"><defs><filter id="soft"><feGaussianBlur stdDeviation="3"/></filter></defs><path d="M640 40Q760 20 900-2" stroke="#6db8e8" stroke-width="8" fill="none" opacity=".4" filter="url(#soft)"/><path d="M1298-10Q1355 10 1392 52" stroke="#b4dcff" stroke-width="14" fill="none" filter="url(#soft)"/></svg>
  <button class="orb" aria-label="Windows"><svg viewBox="0 0 38 38"><defs><radialGradient id="orb" cx="50%" cy="85%" r="75%"><stop offset="0" stop-color="#50d8ff"/><stop offset=".5" stop-color="#1c6aa0"/><stop offset="1" stop-color="#7fa6c0"/></radialGradient></defs><circle cx="19" cy="19" r="17.500" fill="url(#orb)" stroke="#1d4a6c" stroke-width="1.500"/><path d="M10 12Q14 9 19 11L17 18Q12 16 8 18Z" fill="#f06828"/><path d="M20 11Q25 13 30 11L28 18Q23 20 18 18Z" fill="#9ad03c"/><path d="M8 20Q12 17 17 19L15 26Q10 24 6 27Z" fill="#5cb4f0"/><path d="M18 20Q23 22 28 20L26 27Q21 29 16 27Z" fill="#ffd840"/></svg></button>
  <button class="task" aria-label="Chrome"><svg viewBox="0 0 32 32"><circle cx="16" cy="16" r="15" fill="#dd4b3e"/><path d="M3 8.500A15 15 0 0 0 16 31L22 19H10Z" fill="#1da05f"/><path d="M16 31A15 15 0 0 0 30 10H16L22 19Z" fill="#fccc44"/><circle cx="16" cy="16" r="7" fill="#fff"/><circle cx="16" cy="16" r="5.500" fill="#4a86ee"/></svg></button>
  <button class="task stacked" aria-label="Explorer"><svg viewBox="0 0 32 32"><path d="M1 4L3 2H10L12 5H30L31 10V27H1Z" fill="#f0dc88" stroke="#c0a048"/><path d="M3 4h5v3H3z" fill="#28a040"/><path d="M12 5h5v3h-5z" fill="#e05030"/><path d="M21 7h5v3h-5z" fill="#3090e0"/><path d="M1 10H31V27H1Z" fill="#f8eaa4" stroke="#d0b458"/><path d="M5 30V23Q5 19 9 19H24Q28 19 28 23V30H24V24H9V30Z" fill="#a8dcf4" stroke="#6cb4d8"/></svg></button>
  <button class="task plain" aria-label="Firefox"><svg viewBox="0 0 32 32"><circle cx="16" cy="17" r="14" fill="#f04a38"/><path d="M4 8L8 11Q12 4 22 6L21 1Q33 8 30 20T14 31Q2 27 4 8Z" fill="#f97a26"/><circle cx="16" cy="15" r="8" fill="#2850b0"/><path d="M20 2Q34 8 30 20T16 29Q26 26 25 16T20 2Z" fill="#ffe040"/><path d="M4 9L15 12Q10 14 12 19T22 22Q17 28 9 24Q4 19 4 9Z" fill="#f6562c"/></svg></button>
  <button class="task" aria-label="Recorder"><svg viewBox="0 0 32 32"><circle cx="16" cy="16" r="15" fill="#3c3c40" stroke="#777"/><path d="M25 11A10.500 10.500 0 1 0 25 21M21 12A6.500 6.500 0 1 0 21 20M27 16H17" fill="none" stroke="#fff" stroke-width="2.500"/><circle cx="16" cy="16" r="2.500" fill="#fff"/></svg></button>
  <button class="task" aria-label="Control panel"><svg viewBox="0 0 32 32"><rect x="1" y="4" width="30" height="21" rx="2" fill="#3c98dc" stroke="#1c5c9c"/><circle cx="9" cy="12" r="4.500" fill="none" stroke="#fff" stroke-width="2"/><path d="M9 12V7A5 5 0 0 1 14 12Z" fill="#f89828"/><path d="M18 9h9v3h-9zM18 15h9v3h-9z" fill="#fff" stroke="#1c5c9c"/><path d="M5 20h2M9 20h2" stroke="#f89828" stroke-width="2"/><ellipse cx="16" cy="26" rx="6" ry="5" fill="#d8d8dc" stroke="#888"/></svg></button>
  <button class="task" aria-label="CATIA"><svg viewBox="0 0 16 16"><use href="#catia"/></svg></button>
  <div class="tray">
    <svg viewBox="0 0 16 16"><path d="M4 9L8 5 12 9Z" fill="#fff"/></svg>
    <svg viewBox="0 0 16 16"><path d="M1 5H4L8 1V15L4 11H1Z" fill="#fff"/><path d="M10 6Q11 8 10 10M12 4Q14 8 12 12M14 3Q17 8 14 13" stroke="#fff" fill="none"/></svg>
    <svg viewBox="0 0 16 16"><path d="M2 1V15" stroke="#fff" stroke-width="1.500"/><path d="M4 2H8L9 4H14V10H4Z" fill="#fff"/><circle cx="11" cy="11" r="4.500" fill="#e03020"/><path d="M9 9L13 13M13 9L9 13" stroke="#fff" stroke-width="1.500"/></svg>
    <svg viewBox="0 0 16 16"><path d="M6 3H15V12H6M8 15H14M11 12V15" stroke="#fff" fill="none" stroke-width="1.500"/><path d="M1 1V5H5V1M3 5V12H6" stroke="#fff" fill="none" stroke-width="1.500"/></svg>
    <time>1:00 AM<br>12/5/2019</time>
    <button class="desktop" aria-label="Show desktop"></button>
  </div>
</footer>
</body>
</html>
```
FILE: styles.css
```css
*, *::before { box-sizing: border-box; }
body { margin: 0; min-height: 100vh; display: flex; flex-direction: column; overflow: hidden; background: #cfcfe5; font: 12px/16px "Open Sans", "Noto Sans", sans-serif; color: #111; }
button { margin: 0; padding: 0; border: 0; background: none; font: inherit; color: inherit; display: flex; align-items: center; justify-content: center; }
.defs { position: absolute; width: 0; height: 0; }

.titlebar { display: grid; grid-template-columns: 1fr auto 1fr; height: 22px; background: #cdcdcd; }
.app-icon { width: 16px; height: 16px; margin: 4px 0 0 2px; }
.title { margin: 3px 0 0; font-size: 12px; font-weight: 400; }
.win-buttons { justify-self: end; display: flex; height: 19px; margin-right: 2px; border: 1px solid #555; border-top: 0; }
.win-buttons button { width: 25px; border-right: 1px solid #555; }
.win-buttons .close { width: 44px; border-right: 0; }
.win-buttons svg { width: 12px; height: 12px; }

.menubar { display: flex; height: 20px; border-bottom: 1px solid #fff; background: #cfcfe5; }
.doc-icon { width: 19px; height: 19px; margin-right: 2px; }
.menu { padding: 0 15px 0 7px; }
.menu.active { background: #ffe4b5; }
.doc-buttons { display: flex; margin-left: auto; }
.doc-buttons button { width: 19px; border: 1px solid #a8a8ac; background: #efeff2; }
.doc-buttons svg { width: 10px; height: 10px; }

.work { flex: 1; display: flex; }
.viewport { position: relative; flex: 1; min-width: 0; padding-top: 10px; border: solid #85858a; border-width: 2px 0 0 2px; background: linear-gradient(#333366 0%, #444473 66%, #aaaabf 100%); }
.scene { position: absolute; inset: 0; width: 100%; height: 100%; }
.compass { fill: none; stroke: #dcc8ff; stroke-width: 2; }
.axis-names { fill: #ffee00; font: 13px "Open Sans", sans-serif; }
.triad { fill: #fff; font: 12px "Open Sans", sans-serif; }

.tree { position: relative; width: 300px; height: 432px; }
.tree-lines { position: absolute; left: 0; top: 0; width: 300px; height: 432px; }
.rows { position: relative; display: grid; grid-auto-rows: minmax(0, 1fr); height: 100%; margin: 0; padding: 0; list-style: none; color: #fff; font-size: 13px; }
.rows li { display: flex; align-items: center; padding-bottom: 3px; }
.rows span { padding: 1px 2px; border-radius: 2px; background: rgba(44, 44, 94, .6); white-space: nowrap; }
.rows .root span { background: none; }
.node { width: 22px; height: 22px; margin: 0 2px 4px 0; }
.node.flat { height: 12px; }
.root { padding-left: 2px; }
.root .node { width: 24px; height: 24px; margin-right: 1px; }
.l1 { padding-left: 22px; }
.l2 { padding-left: 43px; }
.l3 { padding-left: 62px; }
.l3 .node { width: 24px; height: 24px; margin-right: 1px; }
.current span { text-decoration: underline; }

.sidebar { width: 38px; border-left: 3px solid #fff; background: linear-gradient(90deg, #f2f2fa, #cfcfe5 9px, #cfcfe5 26px, #9f9fb2); }
.group { padding-bottom: 10px; }
.group::before { content: ""; display: block; width: 17px; height: 3px; margin: 4px 0 1px 2px; border: solid #fff; border-width: 1px 0 0; border-bottom: 2px solid #99a; }
.group.low::before { margin-bottom: 4px; }
.group.tight { padding-bottom: 2px; }
.group.ruled { padding-bottom: 4px; }
.group.mid { padding-bottom: 6px; }
.group:last-child { padding-bottom: 0; }
.group.ruled::before { width: auto; margin: 0 0 1px; border: solid #99a; border-width: 1px 0 0; border-bottom: 2px solid #fff; }
.group button { position: relative; width: 35px; height: 29px; padding-top: 3px; }
.group svg, .tools svg { width: 22px; height: 22px; fill: none; stroke: #000; shape-rendering: crispEdges; }
.group use, .group svg:has(use) { stroke: none; }
.drop::after { content: ""; position: absolute; right: -2px; bottom: -1px; border: solid transparent; border-width: 4px 4px 0; border-top-color: #000; }
.group .drop::after { right: 1px; bottom: 0; }
.gray { stroke: #9a9aa2; }

.toolbar { display: flex; height: 38px; border-top: 1px solid #fff; border-bottom: 1px solid #55555f; background: linear-gradient(#fff, #cfcfe5 10px, #cfcfe5 24px, #9f9fb2); }
.tools { display: flex; align-items: center; padding-left: 19px; position: relative; }
.tools:first-child { padding-left: 15px; }
.tools::before { content: ""; position: absolute; left: 11px; top: 4px; width: 3px; height: 17px; border: solid #fff; border-width: 0 0 0 2px; border-right: 1px solid #99a; }
.tools:first-child::before { left: 6px; }
.tools button { position: relative; width: 28px; height: 26px; margin-top: 4px; }
.tools .drop { margin-right: 2px; }
.tools .narrow { width: 22px; }
.tools .on::after { outline: 1px solid #fff; background: #fff; }
.tools .dim { stroke: #a0a0a8; }
.fx { font: italic 22px/22px "Liberation Serif", serif; color: #000; }
.fx small { font: bold 12px "Liberation Serif", serif; }
.digits { font: bold 10px/10px "Liberation Sans", sans-serif; color: #102080; }
select { appearance: none; width: 164px; height: 22px; margin: 4px 0 0 1px; padding: 0 4px; border: 1px solid #777; border-radius: 0; color: #111; font: inherit; background: #fff url("data:image/svg+xml,%3Csvg xmlns='http://www.w3.org/2000/svg' width='9' height='7'%3E%3Cpath d='M1 1L4.500 5 8 1' fill='none' stroke='%23444' stroke-width='2'/%3E%3C/svg%3E") no-repeat right 3px center; }
.brand { width: 44px; height: 34px; margin: 0 4px 0 auto; }
.brand text { fill: #2a2880; font: italic bold 10px "Liberation Sans", sans-serif; }

.status { display: flex; align-items: center; height: 25px; padding-left: 3px; border-bottom: 1px solid #334; background: #cfcfe5; }
.status label { flex: 1; }
.status input { width: 300px; height: 20px; border: 1px solid #666; padding: 0 4px; background: #fff; font: inherit; }
.status button { width: 33px; height: 21px; margin-left: 1px; border: 1px solid #fff; border-right-color: #888; border-bottom-color: #888; }
.status button svg { width: 18px; height: 16px; }

.taskbar { position: relative; display: flex; height: 39px; color: #fff; border-top: 1px solid #9fc8e4; background: linear-gradient(90deg, #1d5a8e, #2b76ab 50px, #5eabd2 120px, #46a4d6 430px, #54aadc 500px, #3a96d0 640px, #2f8bcd 900px, #2576bf 1200px, #1d66b0 1500px, #1c5a9e 1700px, #14437a 1730px, #123a68); }
.sweep { position: absolute; inset: 0; width: 100%; height: 100%; }
.taskbar button { position: relative; }
.orb { width: 56px; margin-right: 4px; }
.orb svg { width: 38px; height: 38px; }
.task { width: 58px; margin-right: 4px; border: 1px solid #2b6f98; border-radius: 2px; box-shadow: inset 0 0 0 1px rgba(255, 255, 255, .5); background: linear-gradient(135deg, rgba(255, 255, 255, .4), rgba(255, 255, 255, .12) 50%, rgba(255, 255, 255, .28)); }
.task.plain { border-color: transparent; box-shadow: none; background: none; }
.task.stacked { border-right-width: 4px; border-right-style: double; }
.task svg { width: 32px; height: 32px; }
.tray { position: relative; display: flex; align-items: center; gap: 8px; margin-left: auto; }
.tray svg { width: 16px; height: 16px; }
.tray time { width: 56px; margin: 0 0 0 12px; line-height: 17px; text-align: center; }
.desktop { width: 15px; height: 38px; border: 1px solid #7898b8; background: linear-gradient(#4a6f98, #1a3c64); }
```
